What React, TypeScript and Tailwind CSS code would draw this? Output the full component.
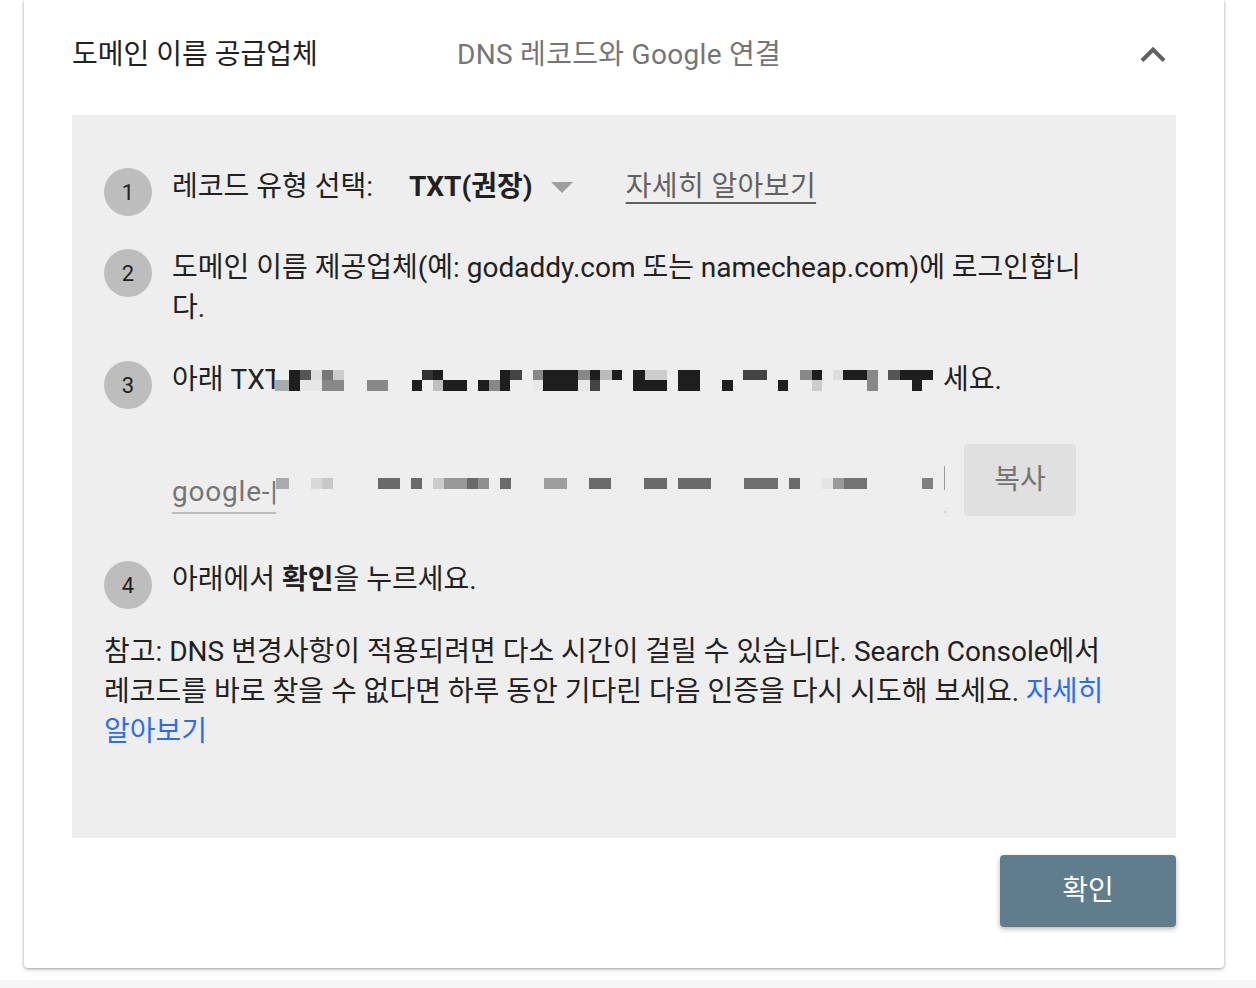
import React from "react"

type Cell = [number, number, number, number, string]

// redacted mosaic over the TXT record text (absolute coords minus origin)
const lineOrigin = 275
const T = 3
const B = 13
const lineCells: Cell[] = [
  [275, B, 14, 11, "#aaaaaa"],
  [289, T, 11, 21, "#1e1e1e"],
  [300, T, 11, 10, "#555555"],
  [300, B, 22, 11, "#e6e6e6"],
  [311, T, 11, 10, "#dddddd"],
  [322, T, 11, 10, "#777777"],
  [322, B, 22, 11, "#888888"],
  [333, T, 11, 10, "#cccccc"],
  [367, B, 21, 11, "#888888"],
  [412, B, 10, 11, "#1e1e1e"],
  [422, T, 11, 10, "#333333"],
  [433, T, 10, 10, "#1e1e1e"],
  [433, B, 10, 11, "#c0c0c0"],
  [443, B, 24, 11, "#1e1e1e"],
  [478, B, 11, 11, "#1e1e1e"],
  [489, B, 11, 11, "#888888"],
  [500, T, 10, 21, "#1e1e1e"],
  [510, T, 12, 10, "#444444"],
  [533, T, 10, 10, "#888888"],
  [533, B, 10, 11, "#e8e8e8"],
  [543, T, 35, 21, "#1e1e1e"],
  [578, T, 12, 10, "#888888"],
  [578, B, 12, 11, "#e8e8e8"],
  [590, T, 10, 10, "#1e1e1e"],
  [590, B, 10, 11, "#444444"],
  [600, T, 12, 10, "#bbbbbb"],
  [612, T, 10, 10, "#1e1e1e"],
  [633, T, 12, 21, "#1e1e1e"],
  [645, T, 22, 10, "#cccccc"],
  [645, B, 22, 11, "#1e1e1e"],
  [678, T, 22, 21, "#1e1e1e"],
  [722, B, 11, 11, "#1e1e1e"],
  [743, T, 24, 10, "#444444"],
  [778, B, 10, 11, "#1e1e1e"],
  [800, T, 12, 10, "#888888"],
  [812, T, 10, 10, "#1e1e1e"],
  [812, B, 10, 11, "#cccccc"],
  [833, T, 10, 10, "#dddddd"],
  [843, T, 24, 10, "#1e1e1e"],
  [867, T, 11, 21, "#888888"],
  [888, T, 12, 10, "#555555"],
  [900, T, 12, 10, "#1e1e1e"],
  [912, T, 10, 21, "#1e1e1e"],
  [922, T, 11, 10, "#1e1e1e"],
]

const inputOrigin = 276
const inputCells: [number, number, string][] = [
  [276, 13, "#aaaaaa"],
  [311, 11, "#d8d8d8"],
  [322, 11, "#c8c8c8"],
  [378, 22, "#6a6a6a"],
  [411, 11, "#6a6a6a"],
  [433, 11, "#cccccc"],
  [444, 23, "#999999"],
  [467, 11, "#6a6a6a"],
  [478, 11, "#8f8f8f"],
  [500, 11, "#6a6a6a"],
  [544, 23, "#9e9e9e"],
  [589, 22, "#6a6a6a"],
  [644, 23, "#6a6a6a"],
  [678, 33, "#6a6a6a"],
  [744, 34, "#6e6e6e"],
  [789, 11, "#6a6a6a"],
  [822, 11, "#e4e4e4"],
  [833, 11, "#9a9a9a"],
  [844, 23, "#737373"],
  [922, 11, "#808080"],
]

function StepBadge({ n }: { n: number }) {
  return (
    <div className="mt-px flex h-12 w-12 shrink-0 items-center justify-center rounded-full bg-[#bdbdbd] text-[22px] text-[#212121]">
      {n}
    </div>
  )
}

export default function App() {
  return (
    <div className="min-h-screen bg-white font-['Roboto','Noto_Sans_CJK_KR',sans-serif] text-[28px] text-[#212121]">
      <div className="mx-6 w-[1200px] rounded-b bg-white pb-[41px] shadow-[0_1px_3px_rgba(0,0,0,0.35),0_2px_10px_rgba(0,0,0,0.08)]">
        {/* header */}
        <div className="flex h-[115px] items-center pb-[6px] pl-12 pr-[46px]">
          <div className="w-[385px] leading-10 text-[#212121]">도메인 이름 공급업체</div>
          <div className="flex-1 leading-10 tracking-[0.3px] text-[#757575]">DNS 레코드와 Google 연결</div>
          <svg width="50" height="50" viewBox="0 0 24 24" fill="#616161">
            <path d="M12 8l-6 6 1.41 1.41L12 10.83l4.59 4.58L18 14z" />
          </svg>
        </div>

        {/* steps panel */}
        <div className="mx-12 h-[723px] bg-[#eeeeee] pl-8 pr-[69px] pt-[52px]">
          <div className="flex items-start">
            <StepBadge n={1} />
            <div className="ml-5 flex items-center leading-10">
              <span>레코드 유형 선택:</span>
              <span className="ml-9 font-bold">TXT(권장)</span>
              <svg className="ml-[18px]" width="22" height="11" viewBox="0 0 22 11">
                <path d="M0 0h22L11 11z" fill="#9e9e9e" />
              </svg>
              <span className="ml-[53px] tracking-[0.4px] text-[#616161] underline decoration-[#616161] underline-offset-[6px]">
                자세히 알아보기
              </span>
            </div>
          </div>

          <div className="mt-8 flex items-start">
            <StepBadge n={2} />
            <p className="ml-5 flex-1 leading-10">
              도메인 이름 제공업체(예: godaddy.com 또는 namecheap.com)에 로그인합니다.
            </p>
          </div>

          <div className="mt-8 flex items-start">
            <StepBadge n={3} />
            <div className="ml-5 flex-1">
              <div className="flex h-10 items-center">
                <span className="w-[103px] shrink-0 overflow-hidden whitespace-nowrap">아래 TXT 레코드를</span>
                <svg width="668" height="27" viewBox="0 0 668 27" className="shrink-0">
                  {lineCells.map(([x, y, w, h, c], i) => (
                    <rect key={i} x={x - lineOrigin} y={y} width={w} height={h} fill={c} />
                  ))}
                </svg>
                <span>세요.</span>
              </div>
              <div className="mt-[44px] flex h-[72px] items-center">
                <div className="flex h-[72px] w-[776px] items-end pb-[2px]">
                  <div className="w-[104px] overflow-hidden whitespace-nowrap border-b-2 border-[#bdbdbd] pb-[5px] leading-[30px] tracking-[0.8px] text-[#757575]">
                    google-|
                  </div>
                  <svg width="672" height="70" viewBox="0 0 672 70" className="shrink-0 self-start">
                    {inputCells.map(([x, w, c], i) => (
                      <rect key={i} x={x - inputOrigin} y={34} width={w} height={11} fill={c} />
                    ))}
                    <rect x={668} y={22} width={1} height={24} fill="#9a9a9a" />
                    <rect x={668} y={67} width={2} height={2} fill="#cccccc" />
                  </svg>
                </div>
                <button className="ml-4 h-[72px] w-[112px] rounded-[4px] bg-[#e0e0e0] text-[#757575]">
                  복사
                </button>
              </div>
            </div>
          </div>

          <div className="mt-[44px] flex items-start">
            <StepBadge n={4} />
            <p className="ml-5 leading-10">
              아래에서 <b className="font-bold">확인</b>을 누르세요.
            </p>
          </div>

          <p className="mt-[23px] leading-10">
            참고: DNS 변경사항이 적용되려면 다소 시간이 걸릴 수 있습니다. Search Console에서 레코드를 바로 찾을 수
            없다면 하루 동안 기다린 다음 인증을 다시 시도해 보세요.{" "}
            <a className="text-[#2b6cf6]">자세히 알아보기</a>
          </p>
        </div>

        {/* footer */}
        <div className="mx-12 mt-[17px] flex justify-end">
          <button className="h-[72px] w-[176px] rounded-[4px] bg-[#607d8b] text-white shadow-[0_2px_5px_rgba(0,0,0,0.3)]">
            확인
          </button>
        </div>
      </div>
      <div className="mt-3 h-5 bg-[#f5f5f5]" />
    </div>
  )
}
